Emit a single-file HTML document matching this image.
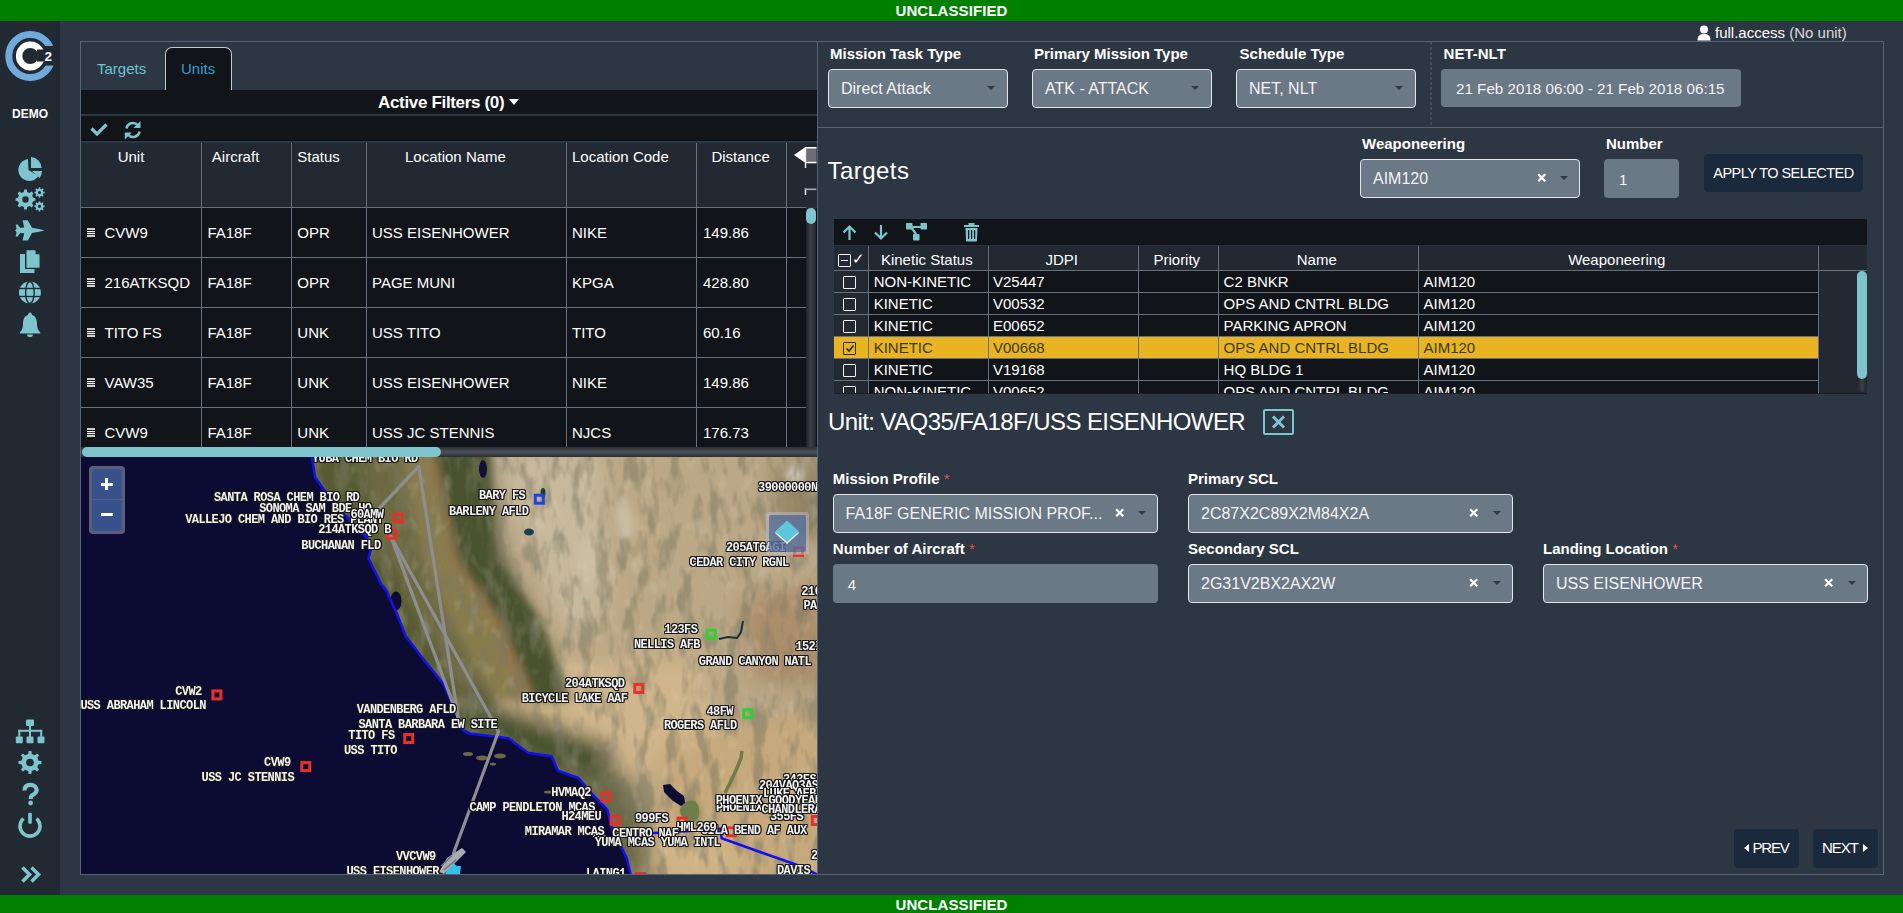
<!DOCTYPE html><html><head><meta charset="utf-8"><style>
*{box-sizing:border-box;margin:0;padding:0}
html,body{width:1903px;height:913px;overflow:hidden;background:#2d3743;font-family:"Liberation Sans",sans-serif;color:#fff}
.a{position:absolute}
.green{background:#008000;left:0;width:1903px;color:#fff;font-weight:bold;font-size:15px;text-align:center;letter-spacing:0.1px}
.blk{background:#111519}
.ln{position:absolute;background:#65717c}
.hdr{background:#222933}
.t15{font-size:15px;white-space:nowrap;line-height:18px;position:absolute}
.t14{font-size:14px;white-space:nowrap;line-height:17px;position:absolute}
.lbl{font-size:15px;font-weight:bold;white-space:nowrap;line-height:17px;position:absolute}
.sel{position:absolute;background:#6b7886;border:1px solid #e4e6e8;border-radius:4px}
.inp{position:absolute;background:#6b7886;border-radius:4px}
.st{font-size:16px;color:#f2f3f4;white-space:nowrap;line-height:18px;position:absolute}
.caret{position:absolute;width:0;height:0;border-left:4.5px solid transparent;border-right:4.5px solid transparent;border-top:4.6px solid #343a40;margin-left:1px;margin-top:-0.7px}
.xm{position:absolute;font-size:14px;font-weight:bold;color:#fff;line-height:14px}
.btn{position:absolute;background:#1a293c;border-radius:4px;color:#fff;white-space:nowrap}
.req{color:#d9534f;font-weight:normal}
.cb{position:absolute;width:13px;height:13px;border:1.6px solid #f2f2f2;border-radius:1px}

.ml{position:absolute;font-family:"Liberation Mono",monospace;font-weight:bold;font-size:12px;letter-spacing:-0.6px;color:#f4f4f4;white-space:nowrap;line-height:12px;
 text-shadow:-1px -1px 0 #181818,1px -1px 0 #181818,-1px 1px 0 #181818,1px 1px 0 #181818,0 1px 0 #181818,0 -1px 0 #181818,1px 0 0 #181818,-1px 0 0 #181818}
</style></head><body>
<div class="a green" style="top:0;height:21px;line-height:21px">UNCLASSIFIED</div>
<div class="a green" style="top:895px;height:18px;line-height:20px">UNCLASSIFIED</div>
<div class="a" style="left:0;top:21px;width:60px;height:874px;background:#212932"></div>
<svg class="a" style="left:0;top:0" width="60" height="913" viewBox="0 0 60 913"><circle cx="30.3" cy="56" r="21.5" fill="none" stroke="#70aadb" stroke-width="7"/><circle cx="30.3" cy="56" r="11.2" fill="none" stroke="#fff" stroke-width="6.4"/><rect x="37" y="49.5" width="20" height="12" fill="#212932"/><rect x="44" y="46" width="14" height="19.5" fill="#212932"/><text x="44.6" y="60.6" font-family="Liberation Sans" font-weight="bold" font-size="13.5" fill="#fff">2</text><text x="30" y="118" text-anchor="middle" font-family="Liberation Sans" font-weight="bold" font-size="12" fill="#fff">DEMO</text><g fill="#7dc4cc"><path d="M28,159 A11,11 0 1 0 38.5,176 L28.5,170 Z"/><path d="M31,157 A11,11 0 0 1 41.5,168 L31,168 Z"/><path d="M32,171 L42,171 A12,12 0 0 1 39.5,178 Z"/><path fill-rule="evenodd" d="M33.11,197.80 L35.41,198.18 L35.41,200.82 L33.11,201.20 L32.09,203.68 L33.44,205.58 L31.58,207.44 L29.68,206.09 L27.20,207.11 L26.82,209.41 L24.18,209.41 L23.80,207.11 L21.32,206.09 L19.42,207.44 L17.56,205.58 L18.91,203.68 L17.89,201.20 L15.59,200.82 L15.59,198.18 L17.89,197.80 L18.91,195.32 L17.56,193.42 L19.42,191.56 L21.32,192.91 L23.80,191.89 L24.18,189.59 L26.82,189.59 L27.20,191.89 L29.68,192.91 L31.58,191.56 L33.44,193.42 L32.09,195.32 Z M28.7,199.5 A3.2,3.2 0 1 0 22.3,199.5 A3.2,3.2 0 1 0 28.7,199.5 Z"/><path fill-rule="evenodd" d="M43.31,191.65 L44.65,191.82 L44.65,193.18 L43.31,193.35 L42.79,194.59 L43.63,195.66 L42.66,196.63 L41.59,195.79 L40.35,196.31 L40.18,197.65 L38.82,197.65 L38.65,196.31 L37.41,195.79 L36.34,196.63 L35.37,195.66 L36.21,194.59 L35.69,193.35 L34.35,193.18 L34.35,191.82 L35.69,191.65 L36.21,190.41 L35.37,189.34 L36.34,188.37 L37.41,189.21 L38.65,188.69 L38.82,187.35 L40.18,187.35 L40.35,188.69 L41.59,189.21 L42.66,188.37 L43.63,189.34 L42.79,190.41 Z M41.1,192.5 A1.6,1.6 0 1 0 37.9,192.5 A1.6,1.6 0 1 0 41.1,192.5 Z"/><path fill-rule="evenodd" d="M43.31,205.45 L44.65,205.62 L44.65,206.98 L43.31,207.15 L42.79,208.39 L43.63,209.46 L42.66,210.43 L41.59,209.59 L40.35,210.11 L40.18,211.45 L38.82,211.45 L38.65,210.11 L37.41,209.59 L36.34,210.43 L35.37,209.46 L36.21,208.39 L35.69,207.15 L34.35,206.98 L34.35,205.62 L35.69,205.45 L36.21,204.21 L35.37,203.14 L36.34,202.17 L37.41,203.01 L38.65,202.49 L38.82,201.15 L40.18,201.15 L40.35,202.49 L41.59,203.01 L42.66,202.17 L43.63,203.14 L42.79,204.21 Z M41.1,206.3 A1.6,1.6 0 1 0 37.9,206.3 A1.6,1.6 0 1 0 41.1,206.3 Z"/><path d="M44.6,230.4 L39,229 L32,227.8 L27.8,220.2 L22.6,220.2 L24.2,227.6 L20.2,227.8 L17.6,224.4 L15.6,224.4 L16.6,228.6 L15.1,230.4 L16.6,232.2 L15.6,236.4 L17.6,236.4 L20.2,233 L24.2,233.2 L22.6,240.6 L27.8,240.6 L32,233 L39,231.8 Z"/><path d="M20,254 L25,254 L25,268.5 L34.5,268.5 L34.5,273 L20,273 Z"/><path d="M25.8,249.7 L35.5,249.7 L40.2,254.4 L40.2,268.4 L25.8,268.4 Z" stroke="#212932" stroke-width="1.3"/><path d="M35.6,250.2 L35.6,254.2 L39.6,254.2 Z" fill="#212932"/></g><g><circle cx="29.9" cy="292.5" r="11" fill="#7dc4cc"/><g stroke="#212932" stroke-width="1.4" fill="none"><ellipse cx="29.9" cy="292.5" rx="4.3" ry="11"/><line x1="18" y1="288.5" x2="42" y2="288.5"/><line x1="18" y1="296.5" x2="42" y2="296.5"/></g></g><g fill="#7dc4cc"><path d="M30,312.5 C31.5,312.5 32,314 32,315 C36,316 37,320 37,324 C37,328 38,330 40.3,332.5 L40.3,333.5 L19.8,333.5 L19.8,332.5 C22,330 23,328 23,324 C23,320 24,316 28,315 C28,314 28.5,312.5 30,312.5 Z"/><path d="M27,334.5 L33,334.5 C33,336.5 31.5,337 30,337 C28.5,337 27,336.5 27,334.5 Z"/><rect x="26" y="719.4" width="8" height="6.6" rx="1"/><rect x="15.8" y="736.5" width="7" height="6.8" rx="1"/><rect x="26.5" y="736.5" width="7" height="6.8" rx="1"/><rect x="37.5" y="736.5" width="7" height="6.8" rx="1"/><rect x="29" y="725" width="2" height="12"/><rect x="18.3" y="729.8" width="23.9" height="2"/><rect x="18.3" y="729.8" width="2" height="7"/><rect x="40.2" y="729.8" width="2" height="7"/></g><path fill="#7dc4cc" fill-rule="evenodd" d="M38.62,760.75 L41.42,761.12 L41.42,763.88 L38.62,764.25 L37.33,767.36 L39.05,769.60 L37.10,771.55 L34.86,769.83 L31.75,771.12 L31.38,773.92 L28.62,773.92 L28.25,771.12 L25.14,769.83 L22.90,771.55 L20.95,769.60 L22.67,767.36 L21.38,764.25 L18.58,763.88 L18.58,761.12 L21.38,760.75 L22.67,757.64 L20.95,755.40 L22.90,753.45 L25.14,755.17 L28.25,753.88 L28.62,751.08 L31.38,751.08 L31.75,753.88 L34.86,755.17 L37.10,753.45 L39.05,755.40 L37.33,757.64 Z M33.8,762.5 A3.8,3.8 0 1 0 26.2,762.5 A3.8,3.8 0 1 0 33.8,762.5 Z"/><path fill="none" stroke="#7dc4cc" stroke-width="4.2" stroke-linecap="butt" d="M24.5,790.5 C24.5,786.5 27,784.8 30.5,784.8 C34,784.8 36.6,787 36.6,790 C36.6,793.5 33,794.5 31.5,796 C30.8,796.7 30.7,797.5 30.7,799"/><circle cx="30.6" cy="803" r="2.4" fill="#7dc4cc"/><path fill="none" stroke="#7dc4cc" stroke-width="3.6" d="M23.5,818.5 A10,10 0 1 0 36.5,818.5"/><rect x="28.2" y="812.7" width="3.6" height="11" rx="1" fill="#7dc4cc"/><path fill="none" stroke="#7dc4cc" stroke-width="3.6" stroke-linejoin="miter" d="M22.5,867.5 L29.5,874.5 L22.5,881.5 M31.5,867.5 L38.5,874.5 L31.5,881.5"/></svg>
<div class="a" style="left:80px;top:41px;width:1804px;height:1px;background:#566576"></div>
<div class="a" style="left:80px;top:874px;width:1804px;height:1px;background:#566576"></div>
<div class="a" style="left:80px;top:41px;width:1px;height:834px;background:#566576"></div>
<div class="a" style="left:817px;top:41px;width:1px;height:834px;background:#566576"></div>
<div class="a" style="left:1883px;top:41px;width:1px;height:834px;background:#566576"></div>
<div class="t15" style="left:97px;top:60px;color:#6cc3d3">Targets</div>
<div class="a blk" style="left:165px;top:47px;width:67px;height:44px;border:1.5px solid #c5cacf;border-bottom:none;border-radius:7px 7px 0 0"></div>
<div class="t15" style="left:181px;top:60px;color:#3d9ad6">Units</div>
<div class="a blk" style="left:81px;top:90px;width:736px;height:24px"></div>
<div class="a blk" style="left:81px;top:115.5px;width:736px;height:25.5px"></div>
<div class="a" style="left:378px;top:93px;font-size:17px;font-weight:bold;line-height:19px;white-space:nowrap;letter-spacing:-0.33px">Active Filters (0)</div>
<div class="caret" style="left:508.3px;top:100px;border-top:6px solid #fff;border-left:5px solid transparent;border-right:5px solid transparent"></div>
<svg class="a" style="left:86px;top:118px" width="60" height="22" viewBox="86 118 60 22"><path fill="none" stroke="#7dc4cc" stroke-width="3.2" d="M91.5,128.5 L97,134 L106.5,124.5"/><g fill="none" stroke="#7dc4cc" stroke-width="2.6"><path d="M126.5,128.5 A6.5,6.5 0 0 1 138,125.5"/><path d="M139.5,131.5 A6.5,6.5 0 0 1 128,134.5"/></g><path fill="#7dc4cc" d="M140.5,121 L140.5,128 L133.5,128 Z M124.8,139.5 L124.8,132.5 L131.8,132.5 Z"/></svg>
<div class="a hdr" style="left:81px;top:143px;width:736px;height:64px"></div>
<div class="a blk" style="left:81px;top:208px;width:736px;height:239px"></div>
<div class="ln" style="left:201px;top:143px;width:1px;height:304px"></div>
<div class="ln" style="left:291px;top:143px;width:1px;height:304px"></div>
<div class="ln" style="left:366px;top:143px;width:1px;height:304px"></div>
<div class="ln" style="left:566px;top:143px;width:1px;height:304px"></div>
<div class="ln" style="left:696px;top:143px;width:1px;height:304px"></div>
<div class="ln" style="left:786px;top:143px;width:1px;height:304px"></div>
<div class="ln" style="left:81px;top:207px;width:725px;height:1px"></div>
<div class="ln" style="left:81px;top:257px;width:725px;height:1px"></div>
<div class="ln" style="left:81px;top:307px;width:725px;height:1px"></div>
<div class="ln" style="left:81px;top:357px;width:725px;height:1px"></div>
<div class="ln" style="left:81px;top:407px;width:725px;height:1px"></div>
<div class="t15" style="left:117.7px;top:148px">Unit</div>
<div class="t15" style="left:211.8px;top:148px">Aircraft</div>
<div class="t15" style="left:297.3px;top:148px">Status</div>
<div class="t15" style="left:405px;top:148px">Location Name</div>
<div class="t15" style="left:572px;top:148px">Location Code</div>
<div class="t15" style="left:711.4px;top:148px">Distance</div>
<svg class="a" style="left:86px;top:228px" width="10" height="10" viewBox="0 0 10 10"><rect x="1" y="0" width="8" height="2" fill="#cfcfcf"/><rect x="1" y="3" width="8" height="1.2" fill="#f5f5f5"/><rect x="1" y="5" width="8" height="1.2" fill="#f5f5f5"/><rect x="1" y="7" width="8" height="2" fill="#cfcfcf"/></svg>
<div class="t15" style="left:104.5px;top:224px">CVW9</div>
<div class="t15" style="left:207.4px;top:224px">FA18F</div>
<div class="t15" style="left:297.3px;top:224px">OPR</div>
<div class="t15" style="left:372px;top:224px">USS EISENHOWER</div>
<div class="t15" style="left:572px;top:224px">NIKE</div>
<div class="t15" style="left:703px;top:224px">149.86</div>
<svg class="a" style="left:86px;top:278px" width="10" height="10" viewBox="0 0 10 10"><rect x="1" y="0" width="8" height="2" fill="#cfcfcf"/><rect x="1" y="3" width="8" height="1.2" fill="#f5f5f5"/><rect x="1" y="5" width="8" height="1.2" fill="#f5f5f5"/><rect x="1" y="7" width="8" height="2" fill="#cfcfcf"/></svg>
<div class="t15" style="left:104.5px;top:274px">216ATKSQD</div>
<div class="t15" style="left:207.4px;top:274px">FA18F</div>
<div class="t15" style="left:297.3px;top:274px">OPR</div>
<div class="t15" style="left:372px;top:274px">PAGE MUNI</div>
<div class="t15" style="left:572px;top:274px">KPGA</div>
<div class="t15" style="left:703px;top:274px">428.80</div>
<svg class="a" style="left:86px;top:328px" width="10" height="10" viewBox="0 0 10 10"><rect x="1" y="0" width="8" height="2" fill="#cfcfcf"/><rect x="1" y="3" width="8" height="1.2" fill="#f5f5f5"/><rect x="1" y="5" width="8" height="1.2" fill="#f5f5f5"/><rect x="1" y="7" width="8" height="2" fill="#cfcfcf"/></svg>
<div class="t15" style="left:104.5px;top:324px">TITO FS</div>
<div class="t15" style="left:207.4px;top:324px">FA18F</div>
<div class="t15" style="left:297.3px;top:324px">UNK</div>
<div class="t15" style="left:372px;top:324px">USS TITO</div>
<div class="t15" style="left:572px;top:324px">TITO</div>
<div class="t15" style="left:703px;top:324px">60.16</div>
<svg class="a" style="left:86px;top:378px" width="10" height="10" viewBox="0 0 10 10"><rect x="1" y="0" width="8" height="2" fill="#cfcfcf"/><rect x="1" y="3" width="8" height="1.2" fill="#f5f5f5"/><rect x="1" y="5" width="8" height="1.2" fill="#f5f5f5"/><rect x="1" y="7" width="8" height="2" fill="#cfcfcf"/></svg>
<div class="t15" style="left:104.5px;top:374px">VAW35</div>
<div class="t15" style="left:207.4px;top:374px">FA18F</div>
<div class="t15" style="left:297.3px;top:374px">UNK</div>
<div class="t15" style="left:372px;top:374px">USS EISENHOWER</div>
<div class="t15" style="left:572px;top:374px">NIKE</div>
<div class="t15" style="left:703px;top:374px">149.86</div>
<svg class="a" style="left:86px;top:428px" width="10" height="10" viewBox="0 0 10 10"><rect x="1" y="0" width="8" height="2" fill="#cfcfcf"/><rect x="1" y="3" width="8" height="1.2" fill="#f5f5f5"/><rect x="1" y="5" width="8" height="1.2" fill="#f5f5f5"/><rect x="1" y="7" width="8" height="2" fill="#cfcfcf"/></svg>
<div class="t15" style="left:104.5px;top:424px">CVW9</div>
<div class="t15" style="left:207.4px;top:424px">FA18F</div>
<div class="t15" style="left:297.3px;top:424px">UNK</div>
<div class="t15" style="left:372px;top:424px">USS JC STENNIS</div>
<div class="t15" style="left:572px;top:424px">NJCS</div>
<div class="t15" style="left:703px;top:424px">176.73</div>
<svg class="a" style="left:790px;top:143px" width="27" height="64" viewBox="790 143 27 64"><path d="M794,155 L805.5,147 L805.5,163 Z" fill="#fff"/><rect x="805.5" y="148" width="11" height="14" fill="#6b6f75"/><rect x="805.5" y="147" width="11" height="1.5" fill="#fff"/><rect x="805.5" y="161.8" width="11" height="1.5" fill="#fff"/><rect x="804.8" y="147" width="1.4" height="21" fill="#f0f0f0"/><rect x="804.8" y="188.5" width="1.4" height="6.5" fill="#f0f0f0"/><rect x="804.8" y="188.5" width="11.5" height="1.6" fill="#a8abb0"/></svg>
<div class="a" style="left:806px;top:208px;width:10px;height:239px;background:linear-gradient(90deg,#1f2328,#3b4047 50%,#1f2328)"></div>
<div class="a" style="left:806px;top:208px;width:10px;height:16px;background:#7dc4cc;border-radius:5px"></div>
<div class="a" style="left:81px;top:447px;width:736px;height:10px;background:linear-gradient(180deg,#2a2f35,#4a5058 50%,#2a2f35)"></div>
<div class="a" style="left:82px;top:447px;width:359px;height:10px;background:#7dc4cc;border-radius:5px"></div>
<div class="a" style="left:81px;top:457px;width:736px;height:417px;overflow:hidden;background:#0b0b33"><svg class="a" style="left:0;top:0" width="736" height="417" viewBox="0 0 736 417"><defs><clipPath id="landclip"><polygon points="230.0,-5.0 231.5,4.0 234.0,20.0 258.0,54.0 265.0,59.0 286.0,81.0 290.0,92.0 287.5,101.5 300.0,127.0 305.0,133.0 316.0,157.0 324.5,179.0 343.0,203.0 362.4,227.0 374.4,253.6 381.7,273.0 389.0,276.5 427.4,281.3 446.7,295.8 470.8,299.4 476.8,313.8 497.3,321.0 511.8,338.0 526.2,352.4 531.0,371.7 545.5,400.6 551.0,423.0 749.0,423.0 749.0,-17.0 230.0,-17.0"/></clipPath><filter id="bl" x="-50%" y="-50%" width="200%" height="200%"><feGaussianBlur stdDeviation="10"/></filter><filter id="bl2" x="-50%" y="-50%" width="200%" height="200%"><feGaussianBlur stdDeviation="5"/></filter><filter id="nz" x="0" y="0" width="100%" height="100%"><feTurbulence type="fractalNoise" baseFrequency="0.07 0.025" numOctaves="3" seed="7"/><feColorMatrix values="0 0 0 0 0.2  0 0 0 0 0.19  0 0 0 0 0.12  4.5 0 0 0 -2.15"/></filter><filter id="nz2" x="0" y="0" width="100%" height="100%"><feTurbulence type="fractalNoise" baseFrequency="0.08 0.05" numOctaves="2" seed="3"/><feColorMatrix values="0 0 0 0 1  0 0 0 0 0.95  0 0 0 0 0.85  1.8 0 0 0 -1.05"/></filter></defs><g clip-path="url(#landclip)"><rect x="0" y="0" width="736" height="417" fill="#b9a685"/><g filter="url(#bl)" transform="translate(-81,-457)"><polygon fill="#bba886" points="540,440 830,440 830,690 540,690"/><polygon fill="#6f6c46" points="300,440 380,440 400,520 395,560 420,640 450,700 430,700 380,600 300,600"/><polygon fill="#8e8c64" points="395,500 455,470 490,560 490,640 470,690 440,660 410,560"/><polygon fill="#a98e66" points="470,600 500,580 520,660 505,700 480,690"/><polygon fill="#4b5632" points="436,440 488,440 495,540 540,640 560,700 535,700 500,620 458,540"/><polygon fill="#c8b99c" points="495,450 600,450 610,600 575,640 530,560"/><polygon fill="#ab8e6c" points="740,600 830,580 830,690 750,680"/><polygon fill="#d0b68c" points="505,665 700,660 720,760 600,775 520,740"/><polygon fill="#47522f" points="440,700 520,712 610,745 620,775 570,780 500,748 450,738"/><polygon fill="#6b6a4a" points="555,770 625,775 650,820 650,880 600,880 565,800"/><polygon fill="#c6a97c" points="660,745 830,705 830,880 650,880"/><polygon fill="#d0b285" points="650,830 740,830 740,880 650,880"/><polygon fill="#968566" points="770,460 830,460 830,540 780,540"/></g><g filter="url(#bl2)" transform="translate(-81,-457)"><polygon fill="#565b33" points="300,440 320,500 355,560 390,620 430,700 465,700 420,620 390,560 370,500 360,440"/><polygon fill="#6d6a43" points="360,440 370,500 390,560 420,620 465,700 495,700 450,620 425,560 410,500 400,440"/><polygon fill="#887b4e" points="400,440 410,500 425,560 450,620 495,700 520,700 490,620 450,560 440,500 420,440"/><polygon fill="#94784e" points="420,440 440,500 450,560 490,620 520,700 535,700 500,620 458,560 445,500 432,440"/><polygon fill="#48532f" points="432,440 445,500 458,560 500,620 535,700 570,700 540,620 495,560 490,500 488,440"/><ellipse cx="692" cy="812" rx="7" ry="12" transform="rotate(-20 692 812)" fill="#6e7a4a"/><ellipse cx="590" cy="560" rx="12" ry="25" transform="rotate(-10 590 560)" fill="#cbbfa4"/><ellipse cx="625" cy="520" rx="8" ry="20" transform="rotate(-10 625 520)" fill="#cbbfa4"/><ellipse cx="795" cy="475" rx="8" ry="10" transform="rotate(0 795 475)" fill="#dcd6c8"/><ellipse cx="480" cy="700" rx="12" ry="20" transform="rotate(-40 480 700)" fill="#5e6242"/></g><rect x="0" y="0" width="736" height="417" filter="url(#nz)" opacity="0.5"/><rect x="0" y="0" width="736" height="417" filter="url(#nz2)" opacity="0.3"/></g><g transform="translate(-81,-457)"><path d="M680,810 C682,802 690,799 696,802 C701,809 700,819 694,822 C686,822 680,817 680,810 Z" fill="#6f7d48"/><path d="M725,793 L731,781 L737,768 L741,758 L742,751" stroke="#6f7d48" stroke-width="3.5" fill="none"/><path d="M663,785 L670,784 L677,791 L684,796 L685,803 L681,806 L673,801 L664,792 Z" fill="#0c0c35"/><path d="M719,639 L728,637 L737,638 L741,632 L743,621" stroke="#1c3038" stroke-width="2" fill="none"/><ellipse cx="396" cy="601" rx="5.5" ry="9.5" fill="#0c0c35"/><ellipse cx="483" cy="469" rx="4" ry="9" fill="#10123a"/><ellipse cx="529" cy="532" rx="5" ry="3.5" fill="#1c4048"/><ellipse cx="543" cy="493" rx="2.5" ry="5" fill="#20402e"/><ellipse cx="468" cy="754" rx="5" ry="2" fill="#6a6848"/><ellipse cx="482" cy="758" rx="6" ry="2.5" fill="#6a6848"/><ellipse cx="500" cy="756" rx="6" ry="2.5" fill="#6a6848"/><ellipse cx="493" cy="764" rx="3" ry="1.5" fill="#6a6848"/><ellipse cx="548" cy="792" rx="4" ry="1.5" fill="#6a6848"/><ellipse cx="524" cy="747" rx="2" ry="1" fill="#6a6848"/><polyline points="311,452 312.5,461 315,477 339,511 346,516 367,538 371,549 368.5,558.5 381,584 386,590 397,614 405.5,636 424,660 443.4,684 455.4,710.6 462.7,730 470,733.5 508.4,738.3 527.7,752.8 551.8,756.4 557.8,770.8 578.3,778 592.8,795 607.2,809.4 612,828.7 626.5,857.6 632,880" fill="none" stroke="#1010f0" stroke-width="2.6" stroke-linejoin="round"/><polyline points="612,838 645.8,833.5 689,831 720.5,828.7 721.7,838.3 760,852 800,866 820,876" fill="none" stroke="#1010f0" stroke-width="2.6" stroke-linejoin="round"/><line x1="418.7" y1="466.6" x2="376.8" y2="510.9" stroke="#8e8e90" stroke-width="3.2" stroke-linecap="round"/><line x1="418.7" y1="466.6" x2="458.3" y2="718" stroke="#8e8e90" stroke-width="3.2" stroke-linecap="round"/><line x1="390.8" y1="536.5" x2="458.3" y2="718" stroke="#8e8e90" stroke-width="3.2" stroke-linecap="round"/><line x1="390.8" y1="536.5" x2="498.5" y2="731.5" stroke="#8e8e90" stroke-width="3.2" stroke-linecap="round"/><line x1="498.5" y1="731.5" x2="453.6" y2="853" stroke="#8e8e90" stroke-width="3.2" stroke-linecap="round"/><rect x="394.0" y="514.2" width="8" height="8" fill="none" stroke="#e8302a" stroke-width="3"/><rect x="387.8" y="530.3" width="8" height="8" fill="none" stroke="#e8302a" stroke-width="3"/><rect x="535.3" y="495.2" width="8" height="8" fill="none" stroke="#2040e0" stroke-width="3"/><rect x="794.6" y="547.4" width="8" height="8" fill="none" stroke="#e8302a" stroke-width="3"/><rect x="707.2" y="630.2" width="8" height="8" fill="none" stroke="#30d030" stroke-width="3"/><rect x="212.9" y="690.9" width="8" height="8" fill="none" stroke="#e8302a" stroke-width="3"/><rect x="634.8" y="684.4" width="8" height="8" fill="none" stroke="#e8302a" stroke-width="3"/><rect x="743.7" y="709.7" width="8" height="8" fill="none" stroke="#30d030" stroke-width="3"/><rect x="404.7" y="734.5" width="8" height="8" fill="none" stroke="#e8302a" stroke-width="3"/><rect x="301.8" y="762.6" width="8" height="8" fill="none" stroke="#e8302a" stroke-width="3"/><rect x="602.0" y="792.8" width="8" height="8" fill="none" stroke="#e8302a" stroke-width="3"/><rect x="611.1" y="816.5" width="8" height="8" fill="none" stroke="#e8302a" stroke-width="3"/><rect x="678.1" y="818.1" width="8" height="8" fill="none" stroke="#e8302a" stroke-width="3"/><rect x="727.3" y="827.8" width="8" height="8" fill="none" stroke="#e8302a" stroke-width="3"/><rect x="812.3" y="816.5" width="8" height="8" fill="none" stroke="#e8302a" stroke-width="3"/><rect x="636.5" y="873.5" width="8" height="8" fill="none" stroke="#e8302a" stroke-width="3"/><path d="M445,874 L452,862 L457,866 L461,866 L460,874 Z" fill="#30c0e8"/><path d="M439,872 L447,858 L462,848 L466,852 L452,866 L444,874 Z" fill="#a8acb0"/><path d="M441,866 L452,856 M444,870 L456,860" stroke="#707478" stroke-width="1.5"/></g></svg><div class="ml" style="left:231.0px;top:-4.2px">YUBA CHEM BIO RD</div><div class="ml" style="left:133.0px;top:34.8px">SANTA ROSA CHEM BIO RD</div><div class="ml" style="left:178.2px;top:45.8px">SONOMA SAM BDE HQ</div><div class="ml" style="left:104.2px;top:56.8px">VALLEJO CHEM AND BIO RES PLANT</div><div class="ml" style="left:269.4px;top:52.3px">60AMW</div><div class="ml" style="left:237.2px;top:67.3px">214ATKSQD B</div><div class="ml" style="left:220.3px;top:82.8px">BUCHANAN FLD</div><div class="ml" style="left:398.0px;top:33.3px">BARY FS</div><div class="ml" style="left:368.1px;top:48.5px">BARLENY AFLD</div><div class="ml" style="left:677.1px;top:24.8px">39000000N</div><div class="ml" style="left:645.0px;top:84.6px">205AT6AGI</div><div class="ml" style="left:608.6px;top:99.5px">CEDAR CITY RGNL</div><div class="ml" style="left:720.2px;top:129.0px">216</div><div class="ml" style="left:722.5px;top:143.3px">PA</div><div class="ml" style="left:583.3px;top:167.4px">123FS</div><div class="ml" style="left:552.9px;top:181.9px">NELLIS AFB</div><div class="ml" style="left:714.4px;top:183.5px">152I</div><div class="ml" style="left:617.8px;top:198.5px">GRAND CANYON NATL</div><div class="ml" style="left:94.2px;top:228.6px">CVW2</div><div class="ml" style="left:-0.6px;top:243.3px">USS ABRAHAM LINCOLN</div><div class="ml" style="left:484.0px;top:221.3px">204ATKSQD</div><div class="ml" style="left:440.7px;top:236.3px">BICYCLE LAKE AAF</div><div class="ml" style="left:275.7px;top:246.5px">VANDENBERG AFLD</div><div class="ml" style="left:625.5px;top:248.6px">48FW</div><div class="ml" style="left:277.5px;top:262.3px">SANTA BARBARA EW SITE</div><div class="ml" style="left:582.9px;top:263.1px">ROGERS AFLD</div><div class="ml" style="left:267.3px;top:273.3px">TITO FS</div><div class="ml" style="left:263.0px;top:288.1px">USS TITO</div><div class="ml" style="left:183.1px;top:300.1px">CVW9</div><div class="ml" style="left:120.6px;top:314.9px">USS JC STENNIS</div><div class="ml" style="left:702.0px;top:316.6px">343FS</div><div class="ml" style="left:678.0px;top:323.1px">204VAQ3AS</div><div class="ml" style="left:689.0px;top:353.9px">355FS</div><div class="ml" style="left:470.3px;top:330.3px">HVMAQ2</div><div class="ml" style="left:682.0px;top:330.8px">LUKE AFB</div><div class="ml" style="left:635.0px;top:345.3px">PHOENIX</div><div class="ml" style="left:634.7px;top:338.3px">PHOENIX GOODYEAR</div><div class="ml" style="left:680.4px;top:347.4px">CHANDLERA</div><div class="ml" style="left:388.4px;top:345.0px">CAMP PENDLETON MCAS</div><div class="ml" style="left:480.4px;top:353.9px">H24MEU</div><div class="ml" style="left:554.0px;top:355.6px">999FS</div><div class="ml" style="left:620.0px;top:368.3px">GILA BEND AF AUX</div><div class="ml" style="left:595.6px;top:365.3px">HML269</div><div class="ml" style="left:511.5px;top:371.3px">EL CENTRO NAF</div><div class="ml" style="left:443.8px;top:369.1px">MIRAMAR MCAS</div><div class="ml" style="left:513.7px;top:380.4px">YUMA MCAS YUMA INTL</div><div class="ml" style="left:315.0px;top:393.8px">VVCVW9</div><div class="ml" style="left:730.0px;top:393.3px">2</div><div class="ml" style="left:696.0px;top:407.6px">DAVIS</div><div class="ml" style="left:265.5px;top:409.1px">USS EISENHOWER</div><div class="ml" style="left:505.0px;top:411.0px">LAING1</div><div class="a" style="left:8px;top:9px;width:36px;height:68px;background:rgba(190,190,210,0.45);border-radius:4px"></div><div class="a" style="left:11px;top:12px;width:30px;height:30px;background:#36518c;border-radius:3px 3px 0 0"></div><div class="a" style="left:11px;top:43px;width:30px;height:31px;background:#36518c;border-radius:0 0 3px 3px"></div><div class="a" style="left:19.5px;top:25.5px;width:12.5px;height:3px;background:#fff"></div><div class="a" style="left:24.3px;top:21px;width:3px;height:12px;background:#fff"></div><div class="a" style="left:19.5px;top:55.5px;width:12.5px;height:3.5px;background:#fff"></div><div class="a" style="left:684.5px;top:54.5px;width:43px;height:43.5px;background:rgba(190,190,210,0.45);border-radius:3px"></div><div class="a" style="left:687.5px;top:57.5px;width:37px;height:37.5px;background:rgba(60,92,145,0.62);border-radius:2px"></div><svg class="a" style="left:687px;top:57px" width="38" height="38" viewBox="0 0 38 38"><path d="M7,19 L19,8 L31,19 L19,30 Z" fill="#f0f0f0"/><path d="M7,17.5 L19,6.5 L31,17.5 L19,28 Z" fill="#5ec6da"/></svg></div>
<svg class="a" style="left:1697px;top:25px" width="14" height="16" viewBox="0 0 14 16"><circle cx="7" cy="4.5" r="4" fill="#fff"/><path d="M0.5,15.5 C0.5,10.5 3,9 7,9 C11,9 13.5,10.5 13.5,15.5 Z" fill="#fff"/></svg>
<div class="t15" style="left:1715px;top:24px;color:#fff">full.access <span style="color:#d8dbde">(No unit)</span></div>
<div class="lbl" style="left:830px;top:45px">Mission Task Type</div>
<div class="sel" style="left:828px;top:69px;width:180px;height:39px"></div>
<div class="st" style="left:841px;top:79.8px">Direct Attack</div>
<div class="caret" style="left:986px;top:86.5px"></div>
<div class="lbl" style="left:1034px;top:45px">Primary Mission Type</div>
<div class="sel" style="left:1032px;top:69px;width:180px;height:39px"></div>
<div class="st" style="left:1045px;top:79.8px">ATK - ATTACK</div>
<div class="caret" style="left:1190px;top:86.5px"></div>
<div class="lbl" style="left:1239.6px;top:45px">Schedule Type</div>
<div class="sel" style="left:1236px;top:69px;width:180px;height:39px"></div>
<div class="st" style="left:1249px;top:79.8px">NET, NLT</div>
<div class="caret" style="left:1394px;top:86.5px"></div>
<svg class="a" style="left:1430px;top:42px" width="2" height="86"><line x1="1" y1="0" x2="1" y2="86" stroke="#566576" stroke-width="1" stroke-dasharray="3,2"/></svg>
<div class="lbl" style="left:1443.6px;top:45px">NET-NLT</div>
<div class="inp" style="left:1441px;top:69px;width:300px;height:38px"></div>
<div class="st" style="left:1456px;top:79.8px;font-size:15.2px">21 Feb 2018 06:00 - 21 Feb 2018 06:15</div>
<div class="a" style="left:818px;top:127px;width:1065px;height:1px;background:#566576"></div>
<div class="a" style="left:827.5px;top:157px;font-size:24px;line-height:28px;white-space:nowrap;letter-spacing:0.45px">Targets</div>
<div class="lbl" style="left:1362px;top:135px">Weaponeering</div>
<div class="sel" style="left:1360px;top:159px;width:220px;height:39px"></div>
<div class="st" style="left:1373px;top:169.8px">AIM120</div>
<svg class="a" style="left:1537.0px;top:173.0px" width="10" height="10" viewBox="0 0 10 10"><path d="M1.2,1.2 L8.2,8.2 M8.2,1.2 L1.2,8.2" stroke="#fff" stroke-width="2.3"/></svg>
<div class="caret" style="left:1559px;top:176.5px"></div>
<div class="lbl" style="left:1606px;top:135px">Number</div>
<div class="inp" style="left:1604px;top:159px;width:75px;height:39px"></div>
<div class="st" style="left:1619px;top:170.8px;font-size:15px">1</div>
<div class="btn" style="left:1704px;top:154px;width:159px;height:38px;font-size:14.5px;line-height:38px;text-align:center;letter-spacing:-0.55px">APPLY TO SELECTED</div>
<div class="a blk" style="left:834px;top:219px;width:1033px;height:26px"></div>
<svg class="a" style="left:834px;top:219px" width="160" height="26" viewBox="834 219 160 26"><g fill="none" stroke="#7dc4cc" stroke-width="2.2"><path d="M849.5,240 L849.5,226.5 M843.5,232.5 L849.5,226.5 L855.5,232.5"/><path d="M881,225 L881,238.5 M875,232.5 L881,238.5 L887,232.5"/><path d="M911,227 L921,227 M911,227 L916,234"/></g><g fill="#7dc4cc"><rect x="906" y="223" width="6.5" height="6.5" rx="0.8"/><rect x="920.5" y="223" width="6.5" height="6.5" rx="0.8"/><rect x="913" y="234" width="6.5" height="6.5" rx="0.8"/><path d="M964,225 L979,225 L979,227 L964,227 Z M968.5,223 L974.5,223 L974.5,225 L968.5,225 Z M965.5,228 L977.5,228 L977,240.5 C977,241 976.5,241.5 976,241.5 L967,241.5 C966.5,241.5 966,241 966,240.5 Z"/></g><g fill="#111519"><rect x="968" y="230" width="1.2" height="9"/><rect x="971" y="230" width="1.2" height="9"/><rect x="974" y="230" width="1.2" height="9"/></g></svg>
<div class="a hdr" style="left:834px;top:246px;width:1033px;height:25px"></div>
<div class="a blk" style="left:868px;top:271px;width:950px;height:122px"></div>
<div class="a hdr" style="left:834px;top:271px;width:34px;height:122px"></div>
<div class="a hdr" style="left:1818px;top:271px;width:49px;height:122px"></div>
<div class="a" style="left:834px;top:337px;width:984px;height:21px;background:#e8b423"></div>
<div class="ln" style="left:868px;top:246px;width:1px;height:147px"></div>
<div class="ln" style="left:988px;top:246px;width:1px;height:147px"></div>
<div class="ln" style="left:1138px;top:246px;width:1px;height:147px"></div>
<div class="ln" style="left:1218px;top:246px;width:1px;height:147px"></div>
<div class="ln" style="left:1418px;top:246px;width:1px;height:147px"></div>
<div class="ln" style="left:1818px;top:246px;width:1px;height:147px"></div>
<div class="ln" style="left:834px;top:270px;width:984px;height:1px"></div>
<div class="ln" style="left:834px;top:292px;width:984px;height:1px"></div>
<div class="ln" style="left:834px;top:314px;width:984px;height:1px"></div>
<div class="ln" style="left:834px;top:336px;width:984px;height:1px"></div>
<div class="ln" style="left:834px;top:358px;width:984px;height:1px"></div>
<div class="ln" style="left:834px;top:380px;width:984px;height:1px"></div>
<div class="ln" style="left:1818px;top:270px;width:49px;height:1px"></div>
<div class="a" style="left:834px;top:244.5px;width:1033px;height:1.5px;background:#2a323c"></div>
<div class="t15" style="left:866.8px;top:251px;width:120px;text-align:center;line-height:17px">Kinetic Status</div>
<div class="t15" style="left:986.8px;top:251px;width:150px;text-align:center;line-height:17px">JDPI</div>
<div class="t15" style="left:1136.8px;top:251px;width:80px;text-align:center;line-height:17px">Priority</div>
<div class="t15" style="left:1216.8px;top:251px;width:200px;text-align:center;line-height:17px">Name</div>
<div class="t15" style="left:1416.8px;top:251px;width:400px;text-align:center;line-height:17px">Weaponeering</div>
<div class="cb" style="left:838px;top:253.5px;width:13px;height:13px"></div><div class="a" style="left:841px;top:259.5px;width:7px;height:1.5px;background:#f2f2f2"></div>
<div class="a" style="left:852px;top:250px;font-size:15px;line-height:17px">&#10003;</div>
<div class="a" style="left:834px;top:271px;width:1033px;height:122px;overflow:hidden">
<div class="cb" style="left:9px;top:4.5px;border-color:#f2f2f2"></div>
<div class="t15" style="left:39.700000000000045px;top:2px;color:#fff">NON-KINETIC</div>
<div class="t15" style="left:159px;top:2px;color:#fff">V25447</div>
<div class="t15" style="left:389.5999999999999px;top:2px;color:#fff">C2 BNKR</div>
<div class="t15" style="left:589.5px;top:2px;color:#fff">AIM120</div>
<div class="cb" style="left:9px;top:26.5px;border-color:#f2f2f2"></div>
<div class="t15" style="left:39.700000000000045px;top:24px;color:#fff">KINETIC</div>
<div class="t15" style="left:159px;top:24px;color:#fff">V00532</div>
<div class="t15" style="left:389.5999999999999px;top:24px;color:#fff">OPS AND CNTRL BLDG</div>
<div class="t15" style="left:589.5px;top:24px;color:#fff">AIM120</div>
<div class="cb" style="left:9px;top:48.5px;border-color:#f2f2f2"></div>
<div class="t15" style="left:39.700000000000045px;top:46px;color:#fff">KINETIC</div>
<div class="t15" style="left:159px;top:46px;color:#fff">E00652</div>
<div class="t15" style="left:389.5999999999999px;top:46px;color:#fff">PARKING APRON</div>
<div class="t15" style="left:589.5px;top:46px;color:#fff">AIM120</div>
<div class="cb" style="left:9px;top:70.5px;border-color:#2a2a10"></div>
<svg class="a" style="left:11px;top:72.5px" width="10" height="10"><path d="M1.5,4.5 L4,7 L8.5,1.5" fill="none" stroke="#2a2a10" stroke-width="1.6"/></svg>
<div class="t15" style="left:39.700000000000045px;top:68px;color:#3b3a1e">KINETIC</div>
<div class="t15" style="left:159px;top:68px;color:#3b3a1e">V00668</div>
<div class="t15" style="left:389.5999999999999px;top:68px;color:#3b3a1e">OPS AND CNTRL BLDG</div>
<div class="t15" style="left:589.5px;top:68px;color:#3b3a1e">AIM120</div>
<div class="cb" style="left:9px;top:92.5px;border-color:#f2f2f2"></div>
<div class="t15" style="left:39.700000000000045px;top:90px;color:#fff">KINETIC</div>
<div class="t15" style="left:159px;top:90px;color:#fff">V19168</div>
<div class="t15" style="left:389.5999999999999px;top:90px;color:#fff">HQ BLDG 1</div>
<div class="t15" style="left:589.5px;top:90px;color:#fff">AIM120</div>
<div class="cb" style="left:9px;top:114.5px;border-color:#f2f2f2"></div>
<div class="t15" style="left:39.700000000000045px;top:112px;color:#fff">NON-KINETIC</div>
<div class="t15" style="left:159px;top:112px;color:#fff">V00652</div>
<div class="t15" style="left:389.5999999999999px;top:112px;color:#fff">OPS AND CNTRL BLDG</div>
<div class="t15" style="left:589.5px;top:112px;color:#fff">AIM120</div>
</div>
<div class="a" style="left:1857px;top:271px;width:10px;height:121px;background:linear-gradient(90deg,#1f2328,#3b4047 50%,#1f2328);border-radius:5px"></div>
<div class="a" style="left:1857px;top:271px;width:10px;height:108px;background:#7dc4cc;border-radius:5px"></div>
<div class="a" style="left:834px;top:392.5px;width:1033px;height:1.5px;background:#1b1f24"></div>
<div class="a" style="left:828px;top:407.5px;font-size:24px;line-height:28px;white-space:nowrap;letter-spacing:-0.58px">Unit: VAQ35/FA18F/USS EISENHOWER</div>
<div class="a" style="left:1263px;top:409px;width:31px;height:26px;border:2.5px solid #7dc4cc;border-radius:2px"></div>
<svg class="a" style="left:1263px;top:409px" width="31" height="26"><path d="M10,7.5 L21,18.5 M21,7.5 L10,18.5" stroke="#7dc4cc" stroke-width="3"/></svg>
<div class="lbl" style="left:832.8px;top:470px">Mission Profile <span class="req">*</span></div>
<div class="sel" style="left:833px;top:494px;width:325px;height:39px"></div>
<div class="st" style="left:845.5px;top:504.8px">FA18F GENERIC MISSION PROF...</div>
<svg class="a" style="left:1115.0px;top:508.0px" width="10" height="10" viewBox="0 0 10 10"><path d="M1.2,1.2 L8.2,8.2 M8.2,1.2 L1.2,8.2" stroke="#fff" stroke-width="2.3"/></svg>
<div class="caret" style="left:1137px;top:511.5px"></div>
<div class="lbl" style="left:832.8px;top:540px">Number of Aircraft <span class="req">*</span></div>
<div class="inp" style="left:833px;top:564px;width:325px;height:39px"></div>
<div class="st" style="left:847.8px;top:575.8px;font-size:15px">4</div>
<div class="lbl" style="left:1188px;top:470px">Primary SCL</div>
<div class="sel" style="left:1188px;top:494px;width:325px;height:39px"></div>
<div class="st" style="left:1201px;top:504.8px">2C87X2C89X2M84X2A</div>
<svg class="a" style="left:1469.0px;top:508.0px" width="10" height="10" viewBox="0 0 10 10"><path d="M1.2,1.2 L8.2,8.2 M8.2,1.2 L1.2,8.2" stroke="#fff" stroke-width="2.3"/></svg>
<div class="caret" style="left:1492px;top:511.5px"></div>
<div class="lbl" style="left:1188px;top:540px">Secondary SCL</div>
<div class="sel" style="left:1188px;top:564px;width:325px;height:39px"></div>
<div class="st" style="left:1201px;top:574.8px">2G31V2BX2AX2W</div>
<svg class="a" style="left:1469.0px;top:578.0px" width="10" height="10" viewBox="0 0 10 10"><path d="M1.2,1.2 L8.2,8.2 M8.2,1.2 L1.2,8.2" stroke="#fff" stroke-width="2.3"/></svg>
<div class="caret" style="left:1492px;top:581.5px"></div>
<div class="lbl" style="left:1543px;top:540px">Landing Location <span class="req">*</span></div>
<div class="sel" style="left:1543px;top:564px;width:325px;height:39px"></div>
<div class="st" style="left:1556px;top:574.8px">USS EISENHOWER</div>
<svg class="a" style="left:1824.0px;top:578.0px" width="10" height="10" viewBox="0 0 10 10"><path d="M1.2,1.2 L8.2,8.2 M8.2,1.2 L1.2,8.2" stroke="#fff" stroke-width="2.3"/></svg>
<div class="caret" style="left:1847px;top:581.5px"></div>
<div class="btn" style="left:1734px;top:829px;width:65px;height:39px"></div>
<div class="btn" style="left:1813px;top:829px;width:65px;height:39px"></div>
<div class="a" style="left:1752.5px;top:839px;font-size:15px;line-height:18px;letter-spacing:-1.2px">PREV</div>
<div class="a" style="left:1744px;top:844px;width:0;height:0;border-right:5px solid #fff;border-top:4.5px solid transparent;border-bottom:4.5px solid transparent"></div>
<div class="a" style="left:1822px;top:839px;font-size:15px;line-height:18px;letter-spacing:-1.05px">NEXT</div>
<div class="a" style="left:1863px;top:844px;width:0;height:0;border-left:5px solid #fff;border-top:4.5px solid transparent;border-bottom:4.5px solid transparent"></div>
</body></html>
